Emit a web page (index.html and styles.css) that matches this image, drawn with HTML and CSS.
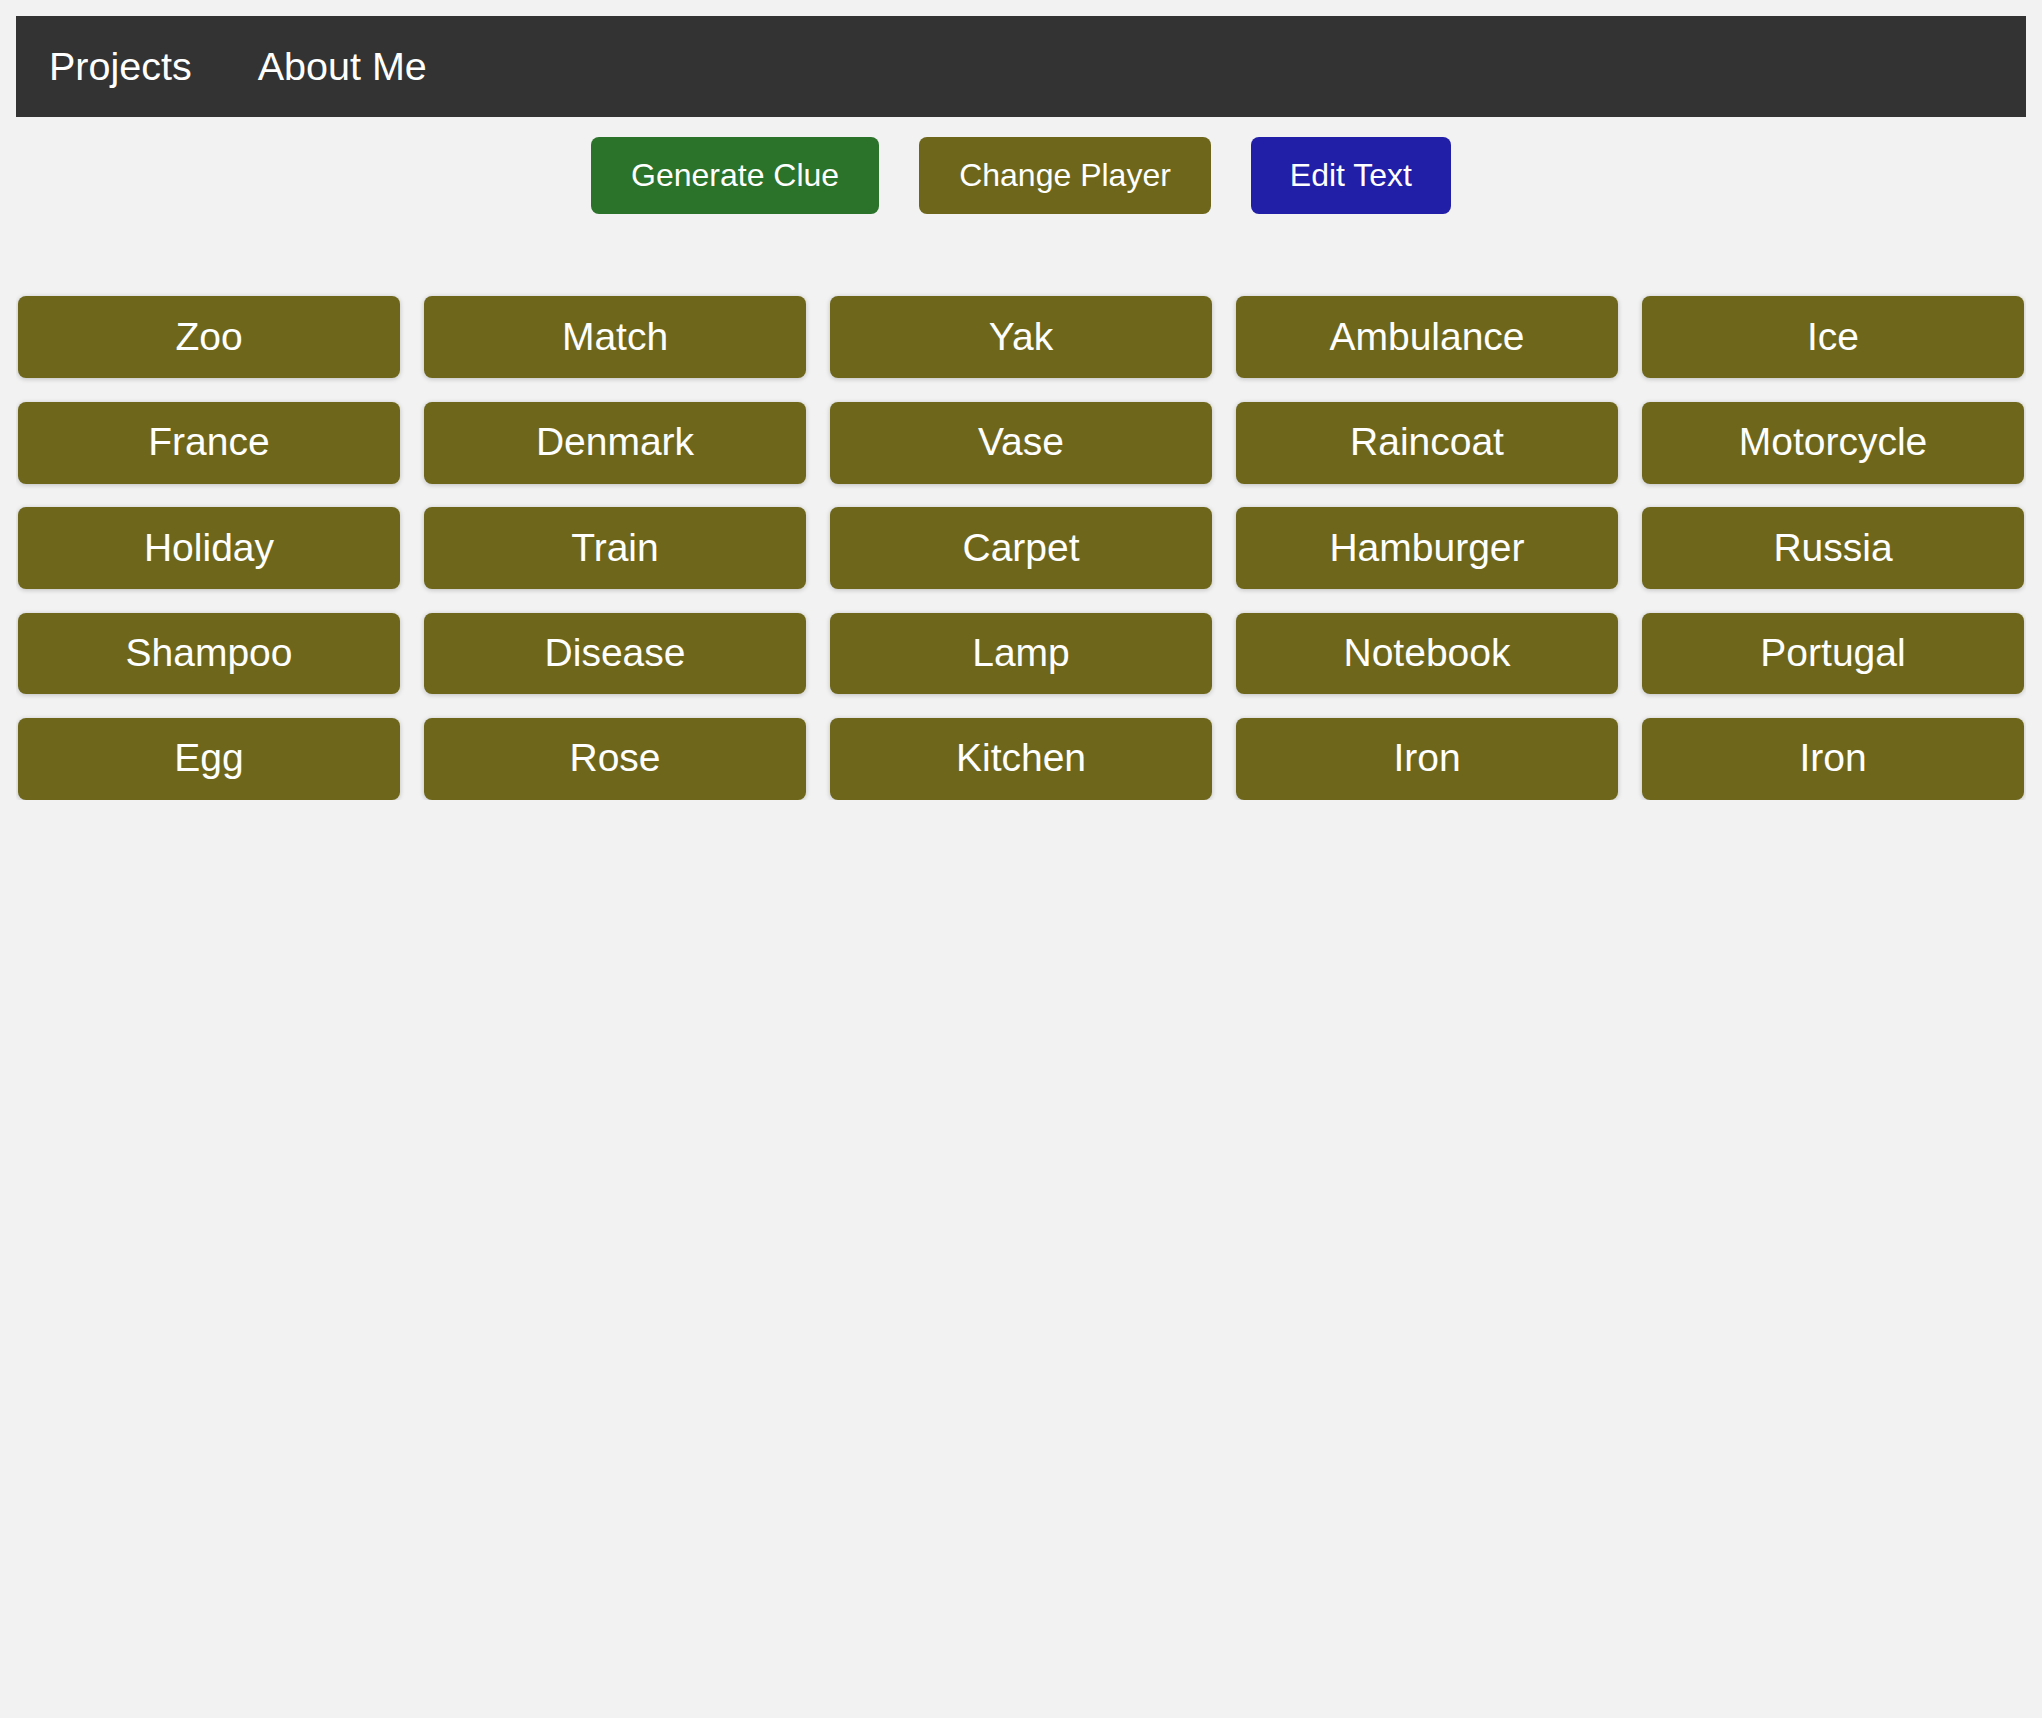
FILE: index.html
```html
<!DOCTYPE html>
<html lang="en">
<head>
<meta charset="utf-8">
<title>Codenames</title>
<link rel="stylesheet" href="styles.css">
</head>
<body>
<nav class="topnav">
  <a class="nav-link" href="#">Projects</a>
  <a class="nav-link" href="#">About Me</a>
</nav>
<div class="controls">
  <button class="btn btn-green">Generate Clue</button>
  <button class="btn btn-olive">Change Player</button>
  <button class="btn btn-blue">Edit Text</button>
</div>
<div class="board">
  <div class="card">Zoo</div>
  <div class="card">Match</div>
  <div class="card">Yak</div>
  <div class="card">Ambulance</div>
  <div class="card">Ice</div>
  <div class="card">France</div>
  <div class="card">Denmark</div>
  <div class="card">Vase</div>
  <div class="card">Raincoat</div>
  <div class="card">Motorcycle</div>
  <div class="card">Holiday</div>
  <div class="card">Train</div>
  <div class="card">Carpet</div>
  <div class="card">Hamburger</div>
  <div class="card">Russia</div>
  <div class="card">Shampoo</div>
  <div class="card">Disease</div>
  <div class="card">Lamp</div>
  <div class="card">Notebook</div>
  <div class="card">Portugal</div>
  <div class="card">Egg</div>
  <div class="card">Rose</div>
  <div class="card">Kitchen</div>
  <div class="card">Iron</div>
  <div class="card">Iron</div>
</div>
</body>
</html>
```
FILE: styles.css
```css
html, body {
  background: #f2f2f2;
}
body {
  margin: 16px;
  font-family: "Liberation Sans", Arial, sans-serif;
  color: #fff;
}
.topnav {
  display: flex;
  background: #333333;
}
.nav-link {
  display: block;
  color: #fff;
  text-decoration: none;
  font-size: 39.5px;
  padding: 28px 33px;
  line-height: 44.9px;
}
.controls {
  display: flex;
  justify-content: center;
  gap: 40px;
  margin-top: 20px;
}
.btn {
  font-family: "Liberation Sans", Arial, sans-serif;
  font-size: 32px;
  line-height: 36.8px;
  color: #fff;
  border: none;
  border-radius: 8px;
  padding: 20.3px 40px;
  cursor: pointer;
}
.btn-green { background: #2b722b; }
.btn-olive { background: #6e671b; }
.btn-blue { background: #211ea8; padding: 20.3px 39px; }
.board {
  display: grid;
  grid-template-columns: repeat(5, 1fr);
  column-gap: 24px;
  row-gap: 23.5px;
  margin-top: 82px;
  padding: 0 2px;
}
.card {
  background: #6e671b;
  border-radius: 8px;
  box-shadow: 0 1px 5px rgba(0, 0, 0, 0.22);
  text-align: center;
  font-size: 39px;
  line-height: 44.9px;
  padding: 18.5px 0;
}
```
